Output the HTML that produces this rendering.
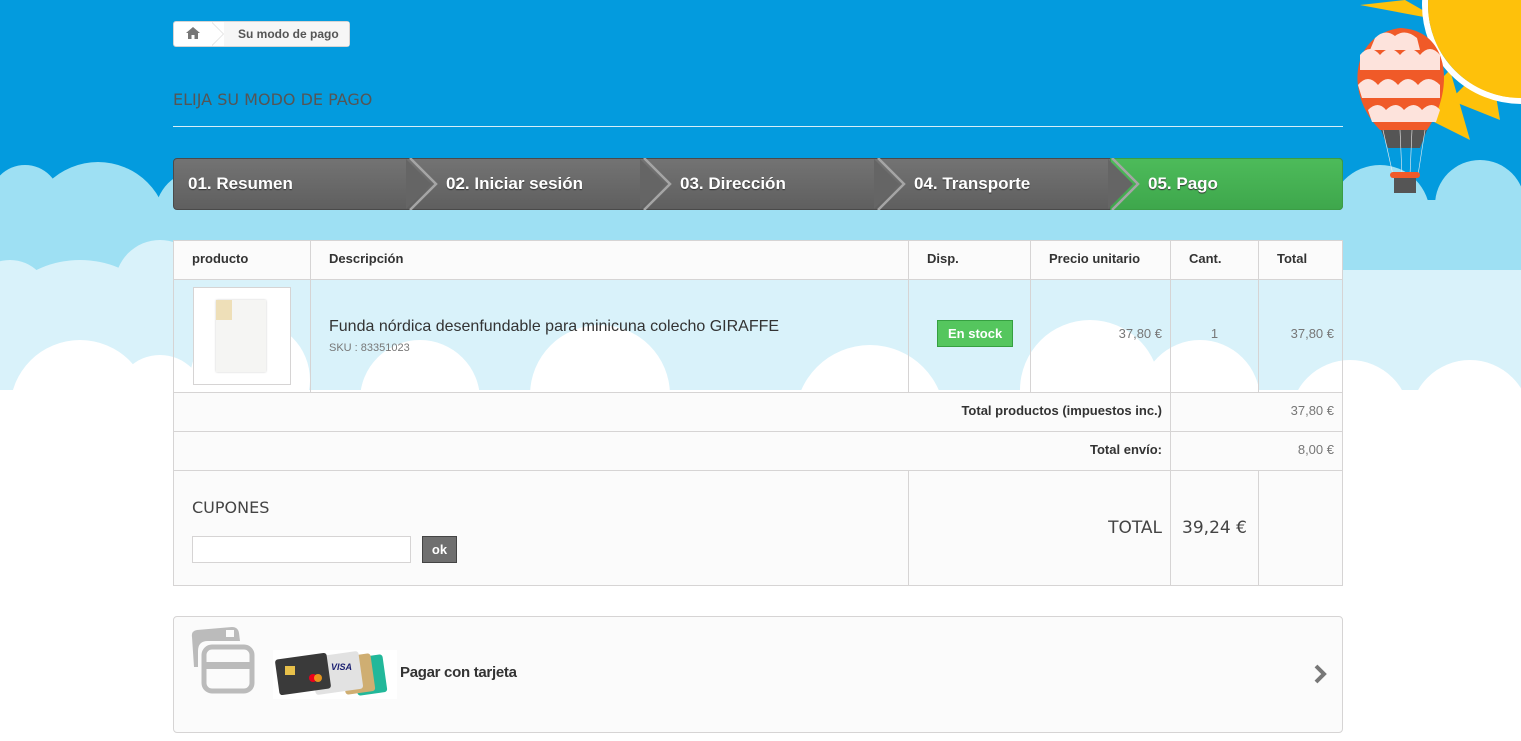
<!DOCTYPE html>
<html><head><meta charset="utf-8"><style>
*{margin:0;padding:0;box-sizing:border-box}
body{width:1521px;height:741px;overflow:hidden;position:relative;font-family:"Liberation Sans",Arial,sans-serif;background:#fff}
.a{position:absolute}
.steps div{position:absolute;top:158px;height:52px;color:#fff;font-weight:bold;font-size:17px;line-height:52px;text-shadow:0 1px 1px #333}
table{position:absolute;left:173px;top:240px;width:1170px;border-collapse:collapse;font-size:13px;color:#333}
td{border:1px solid #d6d4d4}
</style></head><body>
<svg class="a" style="left:0;top:0" width="1521" height="741">
<rect width="1521" height="741" fill="#fff"/>
<rect width="1521" height="420" fill="#039bde"/>
<g fill="#9ee0f3">
<rect x="0" y="200" width="1521" height="220"/>
<circle cx="25" cy="200" r="35"/><circle cx="98" cy="232" r="70"/><circle cx="200" cy="215" r="45"/>
<circle cx="290" cy="250" r="70"/><circle cx="400" cy="260" r="70"/><circle cx="520" cy="265" r="70"/>
<circle cx="650" cy="270" r="65"/><circle cx="760" cy="270" r="60"/><circle cx="880" cy="265" r="60"/>
<circle cx="1000" cy="270" r="60"/><circle cx="1120" cy="270" r="55"/><circle cx="1260" cy="240" r="45"/>
<circle cx="1380" cy="215" r="50"/><circle cx="1480" cy="205" r="45"/>
</g>
<g fill="#d9f2fa">
<rect x="0" y="270" width="1521" height="150"/>
<circle cx="80" cy="360" r="100"/><circle cx="10" cy="300" r="40"/><circle cx="160" cy="285" r="45"/>
<circle cx="320" cy="340" r="80"/><circle cx="500" cy="330" r="60"/><circle cx="700" cy="340" r="60"/>
<circle cx="1085" cy="335" r="55"/><circle cx="1180" cy="330" r="50"/><circle cx="1300" cy="340" r="50"/><circle cx="1450" cy="330" r="60"/>
</g>
<g fill="#fff">
<rect x="0" y="390" width="1521" height="351"/>
<circle cx="80" cy="410" r="70"/><circle cx="160" cy="400" r="45"/><circle cx="250" cy="380" r="60"/>
<circle cx="420" cy="400" r="60"/><circle cx="600" cy="395" r="70"/><circle cx="870" cy="420" r="75"/>
<circle cx="1090" cy="390" r="70"/><circle cx="1200" cy="400" r="60"/><circle cx="1350" cy="420" r="60"/><circle cx="1470" cy="420" r="60"/>
</g>
<g fill="#fec10b">
<polygon points="1360,5 1440,20 1405,0"/>
<polygon points="1370,60 1440,40 1420,100"/>
<polygon points="1410,110 1450,70 1470,140"/>
<polygon points="1450,100 1490,60 1500,120"/>
<circle cx="1521" cy="20" r="80"/>
</g>
<circle cx="1521" cy="5" r="96" fill="none" stroke="#fff" stroke-width="6"/>
<circle cx="1521" cy="5" r="93" fill="#fec10b"/>
<path d="M1380,130 C1345,95 1350,35 1400,28 C1450,30 1455,90 1427,130 Z" fill="#f05a28"/>
<path d="M1360,55 q10,-12 20,0 q10,-12 20,0 q10,-12 20,0 q10,-12 20,0 L1440,70 L1360,70Z M1358,85 q10,-12 20,0 q10,-12 20,0 q10,-12 20,0 q10,-12 22,0 L1440,98 L1362,98Z M1368,110 q10,-10 18,0 q10,-10 18,0 q10,-10 18,0 q10,-10 18,0 L1436,122 L1372,122Z M1375,38 q10,-10 20,-2 q10,-8 22,2 L1420,50 L1370,50Z" fill="#fde3dc"/>
<path d="M1381,130 L1427,130 L1420,148 L1388,148Z" fill="#555"/>
<g stroke="#eee" stroke-width="0.6"><line x1="1383" y1="130" x2="1393" y2="175"/><line x1="1425" y1="130" x2="1418" y2="175"/><line x1="1400" y1="130" x2="1402" y2="175"/><line x1="1412" y1="130" x2="1410" y2="175"/></g>
<rect x="1394" y="176" width="22" height="17" fill="#555"/>
<rect x="1390" y="172" width="30" height="6" rx="3" fill="#f05a28"/>
</svg>

<div class="a" style="left:173px;top:21px;width:177px;height:26px;background:#fff;border:1px solid #d6d4d4;border-radius:3px;"></div>
<div class="a" style="left:211px;top:22px;width:0;height:0;border-top:12px solid transparent;border-bottom:12px solid transparent;border-left:12px solid #fff;filter:drop-shadow(1px 0 0 #ddd)"></div>
<div class="a" style="left:224px;top:22px;width:125px;height:24px;background:#f6f6f6"></div>
<svg class="a" style="left:185px;top:26px" width="16" height="14" viewBox="0 0 16 14"><path d="M8 1 L1 7 L3 7 L3 13 L6.5 13 L6.5 9 L9.5 9 L9.5 13 L13 13 L13 7 L15 7Z" fill="#777"/></svg>
<div class="a" style="left:238px;top:27px;font-size:12px;font-weight:bold;color:#555">Su modo de pago</div>

<div class="a" style="left:173px;top:90px;font-family:'DejaVu Sans',sans-serif;font-size:16px;color:#555">ELIJA SU MODO DE PAGO</div>
<div class="a" style="left:173px;top:126px;width:1170px;height:1px;background:#d6eef9"></div>

<div class="steps">
<div style="left:173px;width:1170px;background:linear-gradient(#737373,#5f5f5f);border-radius:4px;border:1px solid #4a4a4a"></div>
<div style="left:1110px;width:233px;background:linear-gradient(#4dbb5a,#3ea74c);border-radius:0 4px 4px 0;border:1px solid #3b9d45"></div>
<svg class="a" style="left:406px;top:158px" width="740" height="52">
<g fill="none" stroke="#a5a5a5" stroke-width="2.5"><polyline points="4,0 30,26 4,52"/><polyline points="238,0 264,26 238,52"/><polyline points="472,0 498,26 472,52"/><polyline points="706,0 732,26 706,52"/></g>
<g fill="#656565"><polygon points="0,1 25,26 0,51"/><polygon points="234,1 259,26 234,51"/><polygon points="468,1 493,26 468,51"/><polygon points="702,1 727,26 702,51"/></g>
</svg>
<div style="left:188px">01. Resumen</div>
<div style="left:446px">02. Iniciar sesión</div>
<div style="left:680px">03. Dirección</div>
<div style="left:914px">04. Transporte</div>
<div style="left:1148px">05. Pago</div>
</div>

<table>
<tr style="height:39px;background:#fbfbfb;font-weight:bold">
<td style="width:137px;padding-left:18px;padding-bottom:3px">producto</td><td style="width:598px;padding-left:18px;padding-bottom:3px">Descripción</td><td style="width:122px;padding-left:18px;padding-bottom:3px">Disp.</td><td style="width:140px;padding-left:18px;padding-bottom:3px">Precio unitario</td><td style="width:88px;padding-left:18px;padding-bottom:3px">Cant.</td><td style="padding-left:18px;padding-bottom:3px">Total</td></tr>
<tr style="height:113px;color:#777">
<td style="padding-left:19px"><div style="width:98px;height:98px;background:#fff;border:1px solid #d6d4d4;position:relative"><div style="position:absolute;left:22px;top:12px;width:50px;height:72px;background:#f5f5f3;box-shadow:0 0 2px #ccc"></div><div style="position:absolute;left:22px;top:12px;width:16px;height:20px;background:#eedfb8"></div></div></td>
<td style="padding-left:18px"><div style="font-size:16px;color:#333">Funda nórdica desenfundable para minicuna colecho GIRAFFE</div><div style="font-size:11px;margin-top:6px">SKU : 83351023</div></td>
<td style="padding-left:28px;padding-bottom:6px"><span style="display:inline-block;background:#55c65e;border:1px solid #36a041;color:#fff;font-weight:bold;padding:5px 10px">En stock</span></td>
<td style="text-align:right;padding-right:8px;padding-bottom:6px">37,80 €</td><td style="text-align:center;padding-bottom:6px">1</td><td style="text-align:right;padding-right:8px;padding-bottom:6px">37,80 €</td></tr>
<tr style="height:39px;background:#fbfbfb"><td colspan="4" style="text-align:right;padding-right:8px;font-weight:bold;padding-bottom:3px">Total productos (impuestos inc.)</td><td colspan="2" style="text-align:right;padding-right:8px;color:#777;padding-bottom:3px">37,80 €</td></tr>
<tr style="height:39px;background:#fbfbfb"><td colspan="4" style="text-align:right;padding-right:8px;font-weight:bold;padding-bottom:3px">Total envío:</td><td colspan="2" style="text-align:right;padding-right:8px;color:#777;padding-bottom:3px">8,00 €</td></tr>
<tr style="height:115px;background:#fbfbfb"><td colspan="2" style="padding-left:18px;vertical-align:top">
<div style="font-family:'DejaVu Sans',sans-serif;font-size:16px;color:#444;margin-top:27px">CUPONES</div>
<div style="margin-top:19px;display:flex;gap:11px"><div style="width:219px;height:27px;background:#fff;border:1px solid #d6d4d4"></div><div style="width:35px;height:27px;background:#6f6f6f;border:1px solid #444;color:#fff;font-weight:bold;text-align:center;line-height:25px">ok</div></div></td>
<td colspan="2" style="text-align:right;padding-right:8px;font-family:'DejaVu Sans',sans-serif;font-size:17px;color:#444">TOTAL</td>
<td style="text-align:center;font-family:'DejaVu Sans',sans-serif;font-size:17px;color:#444">39,24 €</td><td></td></tr>
</table>

<div class="a" style="left:173px;top:616px;width:1170px;height:117px;background:#fbfbfb;border:1px solid #d6d4d4;border-radius:4px"></div>
<svg class="a" style="left:188px;top:627px" width="68" height="68" viewBox="0 0 68 68">
<path d="M4,10 Q3,4 9,3 L44,0 Q50,0 51,6 L52,14 L20,14 Q10,14 10,24 L10,40 L6,40Z" fill="#bbb"/>
<rect x="38" y="3" width="8" height="7" fill="#fbfbfb"/>
<rect x="16" y="20" width="48" height="44" rx="8" fill="none" stroke="#bbb" stroke-width="5"/>
<rect x="16" y="35" width="48" height="7" fill="#bbb"/>
</svg>
<svg class="a" style="left:273px;top:650px" width="124" height="49">
<rect width="124" height="49" fill="#fff"/>
<rect x="82" y="6" width="30" height="38" rx="3" fill="#22b89a" transform="rotate(-8 97 25)"/>
<rect x="70" y="5" width="30" height="38" rx="3" fill="#cfae72" transform="rotate(-8 85 24)"/>
<rect x="40" y="4" width="48" height="38" rx="3" fill="#e2e2e2" transform="rotate(-8 64 23)"/>
<text x="58" y="20" font-family="Liberation Sans" font-size="9" font-weight="bold" font-style="italic" fill="#1a1f71">VISA</text>
<rect x="4" y="6" width="52" height="36" rx="3" fill="#3a3a3a" transform="rotate(-8 30 24)"/>
<rect x="12" y="16" width="10" height="9" fill="#e8c04a"/>
<circle cx="40" cy="28" r="4" fill="#eb001b"/><circle cx="45" cy="28" r="4" fill="#f79e1b" opacity=".9"/>
</svg>
<div class="a" style="left:400px;top:664px;font-size:15px;font-weight:bold;color:#333;letter-spacing:-.3px">Pagar con tarjeta</div>
<svg class="a" style="left:1312px;top:663px" width="16" height="22"><polyline points="4,3 12,11 4,19" fill="none" stroke="#777" stroke-width="4"/></svg>
</body></html>
